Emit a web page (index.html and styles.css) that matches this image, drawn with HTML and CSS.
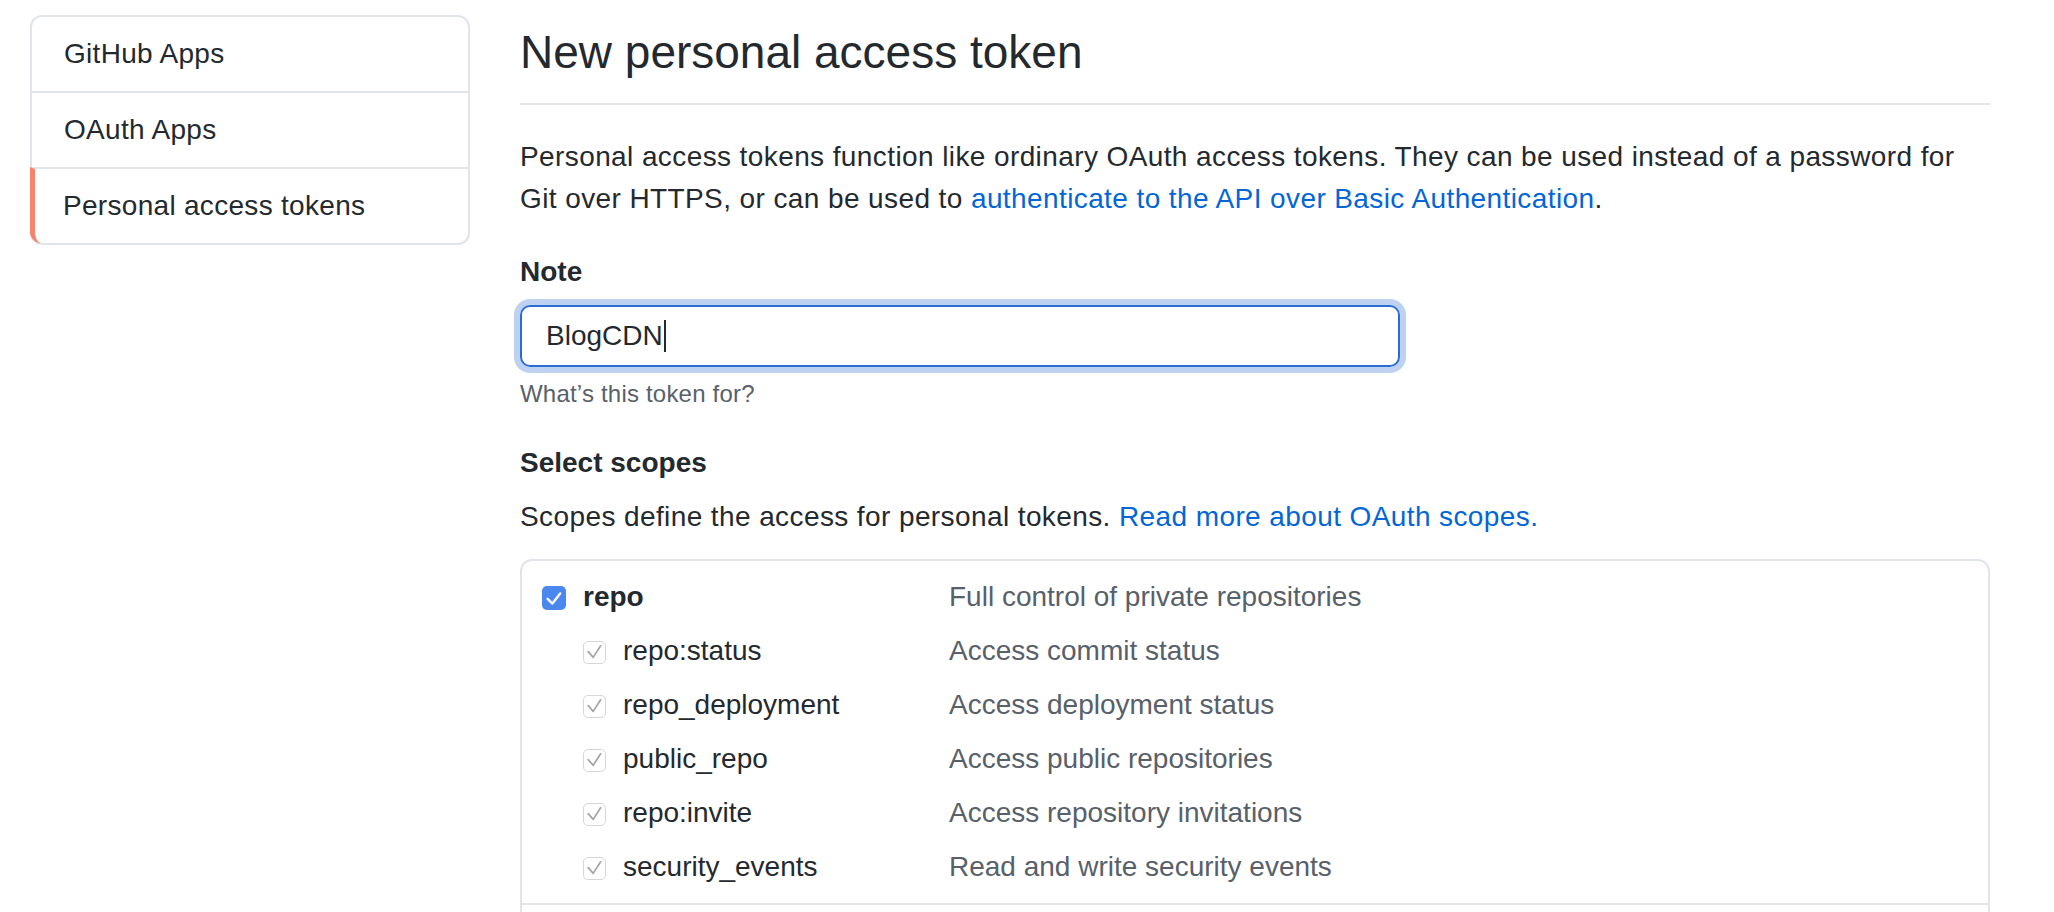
FILE: index.html
```html
<!DOCTYPE html>
<html lang="en">
<head>
<meta charset="utf-8">
<title>New personal access token</title>
<link rel="stylesheet" href="styles.css">
</head>
<body>
<div class="layout">
  <nav class="sidebar">
    <div class="menu">
      <a class="menu-item">GitHub Apps</a>
      <a class="menu-item">OAuth Apps</a>
      <a class="menu-item selected">Personal access tokens</a>
    </div>
  </nav>
  <main class="main">
    <h1 class="title">New personal access token</h1>
    <p class="intro">Personal access tokens function like ordinary OAuth access tokens. They can be used instead of a password for Git over HTTPS, or can be used to <a class="link">authenticate to the API over Basic Authentication</a>.</p>
    <div class="label">Note</div>
    <div class="input"><span class="input-text">BlogCDN</span><span class="caret"></span></div>
    <p class="note">What’s this token for?</p>
    <div class="label scopes-title">Select scopes</div>
    <p class="scopes-desc">Scopes define the access for personal tokens. <a class="link">Read more about OAuth scopes.</a></p>
    <div class="scopes">
      <div class="group">
        <div class="row">
          <div class="cell">
            <span class="cb cb-on"><svg viewBox="0 0 24 24" width="24" height="24"><path d="M5.6 12.8 L10.4 17.6 L18.2 7.4" fill="none" stroke="#fff" stroke-width="2.4" stroke-linecap="round" stroke-linejoin="round"/></svg></span>
            <span class="name strong">repo</span>
          </div>
          <div class="desc">Full control of private repositories</div>
        </div>
        <div class="row">
          <div class="cell sub">
            <span class="cb cb-dis"><svg viewBox="0 0 23 23" width="23" height="23"><path d="M5.2 11.6 L10.2 17.4 L17.6 5.8" fill="none" stroke="#a4a4a4" stroke-width="1.7" stroke-linecap="round" stroke-linejoin="round"/></svg></span>
            <span class="name">repo:status</span>
          </div>
          <div class="desc">Access commit status</div>
        </div>
        <div class="row">
          <div class="cell sub">
            <span class="cb cb-dis"><svg viewBox="0 0 23 23" width="23" height="23"><path d="M5.2 11.6 L10.2 17.4 L17.6 5.8" fill="none" stroke="#a4a4a4" stroke-width="1.7" stroke-linecap="round" stroke-linejoin="round"/></svg></span>
            <span class="name">repo_deployment</span>
          </div>
          <div class="desc">Access deployment status</div>
        </div>
        <div class="row">
          <div class="cell sub">
            <span class="cb cb-dis"><svg viewBox="0 0 23 23" width="23" height="23"><path d="M5.2 11.6 L10.2 17.4 L17.6 5.8" fill="none" stroke="#a4a4a4" stroke-width="1.7" stroke-linecap="round" stroke-linejoin="round"/></svg></span>
            <span class="name">public_repo</span>
          </div>
          <div class="desc">Access public repositories</div>
        </div>
        <div class="row">
          <div class="cell sub">
            <span class="cb cb-dis"><svg viewBox="0 0 23 23" width="23" height="23"><path d="M5.2 11.6 L10.2 17.4 L17.6 5.8" fill="none" stroke="#a4a4a4" stroke-width="1.7" stroke-linecap="round" stroke-linejoin="round"/></svg></span>
            <span class="name">repo:invite</span>
          </div>
          <div class="desc">Access repository invitations</div>
        </div>
        <div class="row">
          <div class="cell sub">
            <span class="cb cb-dis"><svg viewBox="0 0 23 23" width="23" height="23"><path d="M5.2 11.6 L10.2 17.4 L17.6 5.8" fill="none" stroke="#a4a4a4" stroke-width="1.7" stroke-linecap="round" stroke-linejoin="round"/></svg></span>
            <span class="name">security_events</span>
          </div>
          <div class="desc">Read and write security events</div>
        </div>
      </div>
      <div class="group next"></div>
    </div>
  </main>
</div>
</body>
</html>
```

FILE: styles.css
```css
html, body {
  margin: 0;
  padding: 0;
  height: 912px;
  overflow: hidden;
  background: #ffffff;
}

body {
  font-family: "Liberation Sans", Arial, sans-serif;
  color: #24292e;
  font-size: 28px;
  line-height: 42px;
}

.layout {
  display: flex;
  gap: 50px;
  padding-left: 30px;
}

/* Sidebar */
.sidebar {
  flex: none;
  width: 440px;
  padding-top: 15px;
}

.menu {
  border: 2px solid #e1e4e8;
  border-radius: 12px;
  display: flex;
  flex-direction: column;
}

.menu-item {
  display: block;
  padding: 16px 32px;
  font-size: 28px;
  line-height: 42px;
  letter-spacing: 0.3px;
  color: #24292e;
}

.menu-item + .menu-item {
  border-top: 2px solid #e1e4e8;
}

.menu-item.selected {
  margin-left: -2px;
  padding-left: 28px;
  border-left: 5px solid #f9826c;
  border-bottom-left-radius: 11px;
}

/* Main */
.main {
  flex: none;
  width: 1470px;
}

.title {
  margin: 0;
  padding: 22px 0 21px;
  font-size: 46px;
  line-height: 60px;
  font-weight: 400;
  color: #24292e;
  border-bottom: 2px solid #e1e4e8;
}

.intro {
  margin: 31px 0 0;
  letter-spacing: 0.4px;
}

.link {
  color: #0366d6;
  text-decoration: none;
}

.label {
  margin-top: 31px;
  font-weight: 700;
}

.input {
  margin-top: 12px;
  box-sizing: border-box;
  width: 880px;
  height: 62px;
  border: 2px solid #2b6cd4;
  border-radius: 10px;
  box-shadow: 0 0 0 6px #bdd1f1;
  padding: 0 24px;
  line-height: 58px;
  display: flex;
  align-items: center;
}

.input-text {
  color: #24292e;
}

.caret {
  display: inline-block;
  width: 2px;
  height: 32px;
  background: #24292e;
  margin-left: 1px;
}

.note {
  margin: 9px 0 0;
  font-size: 24px;
  line-height: 36px;
  color: #586069;
  letter-spacing: 0.2px;
}

.scopes-title {
  margin-top: 30px;
}

.scopes-desc {
  margin: 12px 0 0;
  letter-spacing: 0.4px;
}

/* Scopes box */
.scopes {
  margin-top: 21px;
  border: 2px solid #e1e4e8;
  border-radius: 12px;
}

.group {
  padding: 10px 20px 8px;
}

.group.next {
  border-top: 2px solid #e1e4e8;
  height: 60px;
}

.row {
  display: flex;
  align-items: center;
  height: 54px;
}

.cell {
  flex: none;
  box-sizing: border-box;
  width: 407px;
  display: flex;
  align-items: center;
  gap: 17px;
}

.cell.sub {
  padding-left: 41px;
}

.name {
  color: #24292e;
  position: relative;
  top: -1px;
}

.name.strong {
  font-weight: 700;
}

.desc {
  color: #586069;
  position: relative;
  top: -1px;
}

.cb {
  flex: none;
  display: inline-flex;
  box-sizing: border-box;
  border-radius: 5px;
}

.cb svg {
  display: block;
}

.cb-on {
  width: 24px;
  height: 24px;
  background: #4a87ee;
}

.cb-dis {
  width: 23px;
  height: 23px;
  background: #ffffff;
  border: 1.5px solid #d7d7d7;
}

.cb-dis svg {
  margin: -1.5px;
}
```
